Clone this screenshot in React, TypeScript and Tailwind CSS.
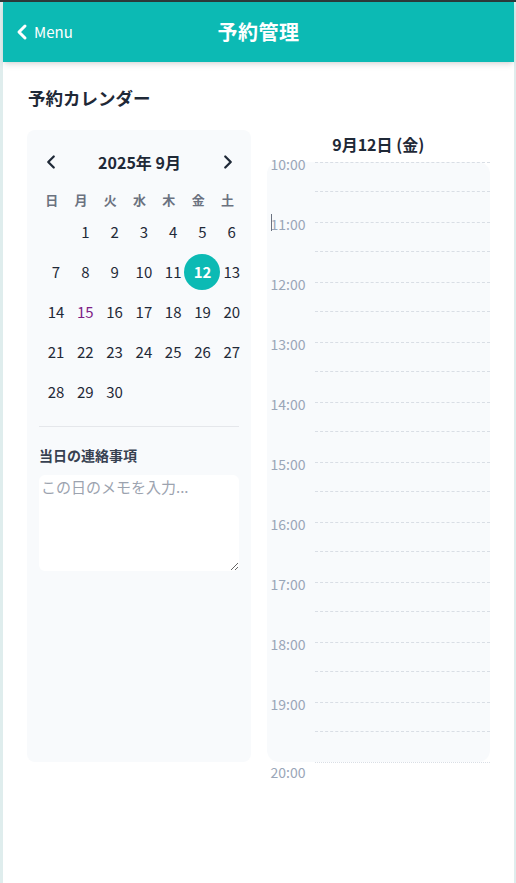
import React from "react";
import { ChevronLeft, ChevronRight } from "lucide-react";

const WEEKDAYS = ["日", "月", "火", "水", "木", "金", "土"];
const HOURS = [10, 11, 12, 13, 14, 15, 16, 17, 18, 19];

const App: React.FC = () => {
  // Sept 2025 starts on Monday
  const cells: (number | null)[] = [null, ...Array.from({ length: 30 }, (_, i) => i + 1)];

  const getDayClass = (day: number) => {
    if (day === 12) return "bg-[#0cbab4] text-white font-bold";
    if (day === 15) return "text-[#7e1f86]";
    return "text-[#1f2937]";
  };

  return (
    <div className="min-h-screen bg-[#dfeded] font-['Noto_Sans_CJK_JP',sans-serif]">
      <div className="h-[2px] bg-[#2c3a3a]" />
      <div className="ml-[3px] mr-[2px] min-h-[881px] bg-white">
        <header className="h-[60px] bg-[#0cbab4] shadow-md grid grid-cols-[1fr_auto_1fr] items-center">
          <div className="flex items-center gap-[4px] pl-[7px] text-white text-[15px]">
            <ChevronLeft size={24} strokeWidth={3} className="-mr-[4px]" />
            <span>Menu</span>
          </div>
          <h1 className="text-white text-[20px] font-bold tracking-[0.5px]">予約管理</h1>
          <div />
        </header>

        <main className="px-6">
          <h2 className="mt-6 h-6 leading-6 text-[17.5px] font-bold text-[#1f2937] pl-px">予約カレンダー</h2>

          <div className="mt-5 grid grid-cols-2 gap-4">
            {/* calendar card */}
            <div className="bg-[#f8fafc] rounded-lg pt-4 px-[10px]">
              <div className="flex items-center justify-between h-8 w-[205px]">
                <button className="w-7 h-8 flex items-center justify-center text-[#1f2937]">
                  <ChevronLeft size={22} strokeWidth={2.5} />
                </button>
                <p className="text-[16px] font-bold text-[#1f2937]">2025年 9月</p>
                <button className="w-7 h-8 flex items-center justify-center text-[#1f2937]">
                  <ChevronRight size={22} strokeWidth={2.5} />
                </button>
              </div>

              <div className="mt-2.5 grid grid-cols-[repeat(7,29.3px)]">
                {WEEKDAYS.map(w => (
                  <div key={w} className="h-6 flex items-center justify-center text-[13px] font-bold text-[#6b7280]">{w}</div>
                ))}
              </div>

              <div className="mt-0.5 grid grid-cols-[repeat(7,29.3px)] gap-y-1">
                {cells.map((day, i) => (
                  <div key={i} className="h-9">
                    {day && (
                      <div className={`ml-px w-9 h-9 rounded-full flex items-center justify-center text-[15px] ${getDayClass(day)}`}>
                        {day}
                      </div>
                    )}
                  </div>
                ))}
              </div>

              <div className="mx-[2px] mt-4 border-t border-[#e5e7eb]" />

              <div className="mx-[2px] pt-[18px]">
                <p className="text-[14px] leading-5 font-bold text-[#374151]">当日の連絡事項</p>
                <textarea
                  className="mt-2.5 block w-full h-24 bg-white rounded-md px-[2px] py-0 text-[15px] leading-6 placeholder:text-[#9ca3af] outline-none"
                  placeholder="この日のメモを入力..."
                />
              </div>
            </div>

            {/* day timeline */}
            <div className="flex flex-col">
              <p className="h-8 text-center text-[16px] font-bold text-[#1f2937] pt-[2px]">9月12日 (金)</p>
              <div className="bg-[#f8fafc] rounded-xl">
                {HOURS.map(h => (
                  <div key={h} className="h-[60px] flex">
                    <div className="w-12 pl-1 relative">
                      <span className="block -mt-1.5 leading-4 text-[14px] text-[#9aa6b8]">{h}:00</span>
                      {h === 11 && <span className="absolute left-1 top-[-8px] w-px h-[17px] bg-[#6b7280]" />}
                    </div>
                    <div className="flex-1 border-t border-dashed border-[#d9dee5]">
                      <div className="h-[29px] border-b border-dashed border-[#d9dee5]" />
                    </div>
                  </div>
                ))}
              </div>
              <div className="h-0 flex">
                <div className="w-12 pl-1">
                  <span className="block mt-[2px] leading-4 text-[14px] text-[#9aa6b8]">20:00</span>
                </div>
                <div className="flex-1 border-t border-dotted border-[#d9dee5]" />
              </div>
            </div>
          </div>
        </main>
      </div>
    </div>
  );
};

export default App;
